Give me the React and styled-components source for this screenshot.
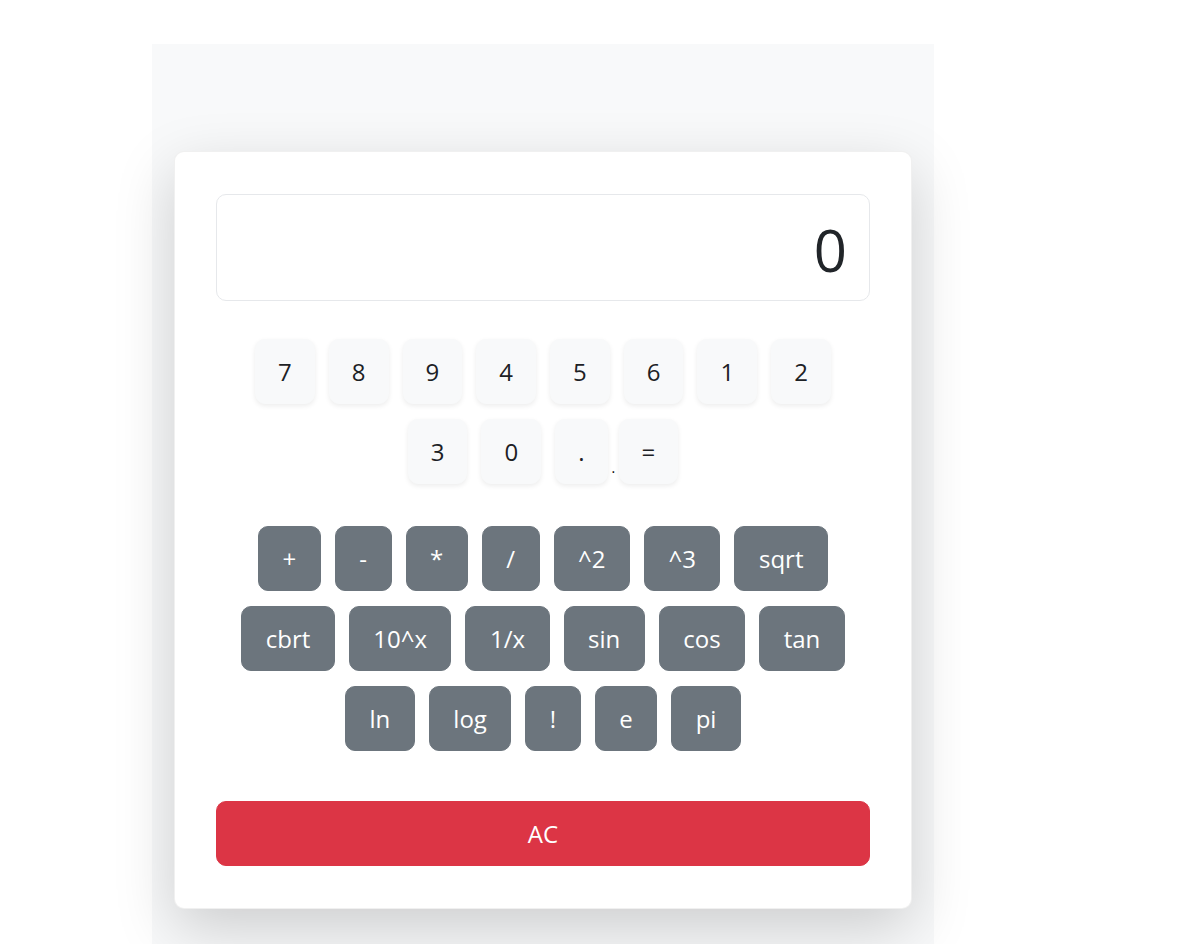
import React from 'react'
import styled, { createGlobalStyle, css } from 'styled-components'

const GlobalStyle = createGlobalStyle`
  html, body {
    margin: 0;
    background: #fff;
  }

  body {
    font-family: 'Open Sans', 'Noto Sans', 'Liberation Sans', sans-serif;
    color: #212529;
  }
`

const Page = styled.div`
  padding: 44px 0 0 152px;
`

const Panel = styled.main`
  width: 782px;
  min-height: 920px;
  box-sizing: border-box;
  padding: 107px 22px 0;
  background: #f8f9fa;
`

const Card = styled.section`
  background: #fff;
  border: 1px solid rgba(0, 0, 0, 0.06);
  border-radius: 10px;
  box-shadow: 0 20px 60px rgba(0, 0, 0, 0.175);
  padding: 42px 41px 42px;
`

const Screen = styled.div`
  height: 107px;
  box-sizing: border-box;
  border: 1px solid #e6e8eb;
  border-radius: 10px;
  display: flex;
  align-items: center;
  justify-content: flex-end;
  padding: 4px 22px 0;
  font-size: 58px;
  line-height: 1;
  color: #212529;
`

const Pad = styled.div`
  display: flex;
  flex-direction: column;
  gap: 15px;
  margin-top: ${p => p.top}px;
`

const Row = styled.div`
  display: flex;
  justify-content: center;
  gap: ${p => (p.tight ? 0 : 14)}px;
`

const digitLook = css`
  padding: 0 22px;
  background: #f8f9fa;
  border-color: #f8f9fa;
  color: #1d2125;
  box-shadow: 0 2px 5px rgba(0, 0, 0, 0.075);
`

const opLook = css`
  padding: 0 23.5px;
  background: #6c757d;
  border-color: #6c757d;
  color: #fff;
`

const Key = styled.button`
  height: 65px;
  box-sizing: border-box;
  margin: 0 ${p => (p.spread ? 7 : 0)}px;
  border: 1px solid transparent;
  border-radius: 10px;
  font-family: inherit;
  font-size: 24px;
  line-height: 1;
  display: flex;
  align-items: center;
  justify-content: center;
  cursor: pointer;
  ${p => (p.op ? opLook : digitLook)}
`

const Stray = styled.span`
  width: 0;
  margin-left: -3px;
  align-self: flex-end;
  margin-bottom: 9px;
  font-size: 14px;
  line-height: 1;
  color: #000;
`

const ClearKey = styled.button`
  display: block;
  width: 100%;
  height: 65px;
  margin-top: 50px;
  border: 1px solid #dc3545;
  border-radius: 10px;
  background: #dc3545;
  color: #fff;
  font-family: inherit;
  font-size: 24px;
  cursor: pointer;
`

const digitsTop = ['7', '8', '9', '4', '5', '6', '1', '2']
const opRows = [
  ['+', '-', '*', '/', '^2', '^3', 'sqrt'],
  ['cbrt', '10^x', '1/x', 'sin', 'cos', 'tan'],
  ['ln', 'log', '!', 'e', 'pi'],
]

const App = () => (
  <Page>
    <GlobalStyle />
    <Panel>
      <Card>
        <Screen>0</Screen>

        <Pad top={38}>
          <Row>
            {digitsTop.map(d => (
              <Key key={d}>{d}</Key>
            ))}
          </Row>
          <Row tight>
            <Key spread>3</Key>
            <Key spread>0</Key>
            <Key spread>.</Key>
            <Stray>.</Stray>
            <Key spread>=</Key>
          </Row>
        </Pad>

        <Pad top={42}>
          {opRows.map((row, i) => (
            <Row key={i}>
              {row.map(o => (
                <Key op key={o}>
                  {o}
                </Key>
              ))}
            </Row>
          ))}
        </Pad>

        <ClearKey>AC</ClearKey>
      </Card>
    </Panel>
  </Page>
)

export default App
